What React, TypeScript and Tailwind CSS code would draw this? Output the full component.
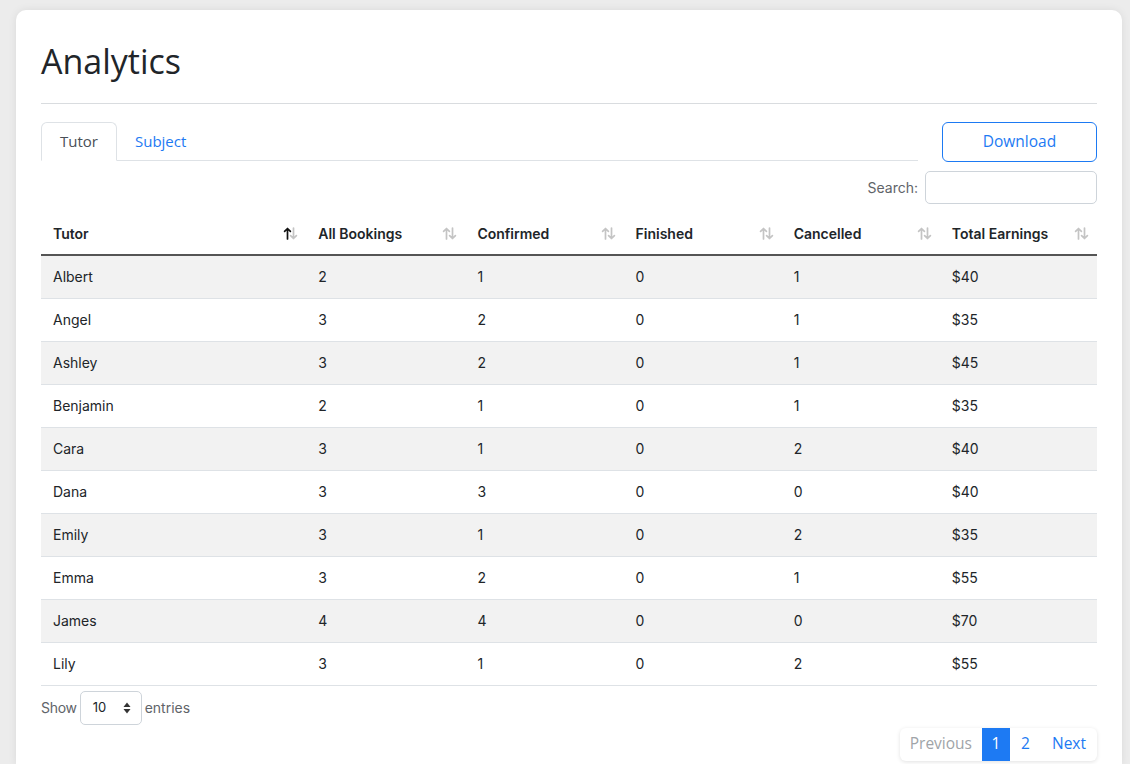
import React from "react";

type Row = { name: string; all: number; confirmed: number; finished: number; cancelled: number; earnings: string };

const rows: Row[] = [
    { name: "Albert", all: 2, confirmed: 1, finished: 0, cancelled: 1, earnings: "$40" },
    { name: "Angel", all: 3, confirmed: 2, finished: 0, cancelled: 1, earnings: "$35" },
    { name: "Ashley", all: 3, confirmed: 2, finished: 0, cancelled: 1, earnings: "$45" },
    { name: "Benjamin", all: 2, confirmed: 1, finished: 0, cancelled: 1, earnings: "$35" },
    { name: "Cara", all: 3, confirmed: 1, finished: 0, cancelled: 2, earnings: "$40" },
    { name: "Dana", all: 3, confirmed: 3, finished: 0, cancelled: 0, earnings: "$40" },
    { name: "Emily", all: 3, confirmed: 1, finished: 0, cancelled: 2, earnings: "$35" },
    { name: "Emma", all: 3, confirmed: 2, finished: 0, cancelled: 1, earnings: "$55" },
    { name: "James", all: 4, confirmed: 4, finished: 0, cancelled: 0, earnings: "$70" },
    { name: "Lily", all: 3, confirmed: 1, finished: 0, cancelled: 2, earnings: "$55" },
];

const columns = [
    { label: "Tutor", width: "w-[265px]", active: true },
    { label: "All Bookings", width: "w-[159px]", active: false },
    { label: "Confirmed", width: "w-[158px]", active: false },
    { label: "Finished", width: "w-[158px]", active: false },
    { label: "Cancelled", width: "w-[158px]", active: false },
    { label: "Total Earnings", width: "w-[157px]", active: false },
];

// little up/down arrows like datatables
const SortIcon: React.FC<{ active: boolean }> = ({ active }) => (
    <svg width="15" height="13" viewBox="0 0 15 13" fill="none" strokeWidth="1.7" strokeLinecap="round" strokeLinejoin="round">
        <path d="M4.5 12V1.5M1.6 4.4L4.5 1.5l2.9 2.9" stroke={active ? "#111" : "#c4c4c4"} />
        <path d="M10.5 1v10.5M7.6 8.6l2.9 2.9 2.9-2.9" stroke="#c4c4c4" />
    </svg>
);

const poppins = "font-['Open_Sans',sans-serif]";

export default function App() {
    return (
        <div className="min-h-[764px] bg-[#ececec] pt-[10px] pl-[16px] pr-[8px] font-['Inter',sans-serif] text-[#212529]">
            <div className="bg-white rounded-t-[10px] shadow-[0_0_8px_rgba(0,0,0,0.08)] px-[25px] pt-[30px] pb-[4px]">
                {/* Header */}
                <h1 className={`${poppins} text-[34px] leading-[42px] text-[#212529] font-normal`}>Analytics</h1>
                <div className="mt-[21px] border-t border-[#d9dcdf]" />

                {/* Tabs + download */}
                <div className="mt-[18px] flex items-start">
                    <div className="flex-1 flex border-b border-[#dee2e6] h-[39px] mr-[24px]">
                        <div className={`${poppins} px-[18px] h-[39px] flex items-center border border-[#dee2e6] border-b-white rounded-t-[6px] -mb-px bg-white text-[15px] text-[#495057]`}>
                            Tutor
                        </div>
                        <div className={`${poppins} px-[18px] h-[39px] flex items-center text-[15px] text-[#1d7af3]`}>Subject</div>
                    </div>
                    <button className={`${poppins} w-[155px] h-[40px] border border-[#1d7af3] rounded-[6px] text-[15.5px] text-[#1d7af3]`}>
                        Download
                    </button>
                </div>

                {/* Search */}
                <div className="mt-[9px] flex justify-end items-center gap-[7px]">
                    <span className="text-[14px] text-[#5f6469]">Search:</span>
                    <input className="w-[172px] h-[33px] border border-[#ced4da] rounded-[5px] outline-none" />
                </div>

                {/* Table */}
                <table className="mt-[9px] w-full border-collapse text-[14px]">
                    <thead>
                        <tr className="border-b-2 border-[#555]">
                            {columns.map((c) => (
                                <th key={c.label} className={`${c.width} h-[42px] pl-[12px] pr-[8px] text-left font-semibold`}>
                                    <div className="flex items-center justify-between">
                                        <span>{c.label}</span>
                                        <SortIcon active={c.active} />
                                    </div>
                                </th>
                            ))}
                        </tr>
                    </thead>
                    <tbody>
                        {rows.map((r, i) => (
                            <tr key={r.name} className={`border-b border-[#dee2e6] ${i % 2 === 0 ? "bg-[#f2f2f2]" : "bg-white"}`}>
                                <td className="h-[43px] px-[12px]">{r.name}</td>
                                <td className="px-[12px]">{r.all}</td>
                                <td className="px-[12px]">{r.confirmed}</td>
                                <td className="px-[12px]">{r.finished}</td>
                                <td className="px-[12px]">{r.cancelled}</td>
                                <td className="px-[12px]">{r.earnings}</td>
                            </tr>
                        ))}
                    </tbody>
                </table>

                {/* Footer */}
                <div className="mt-[5px] flex items-center gap-[3px] text-[14px] text-[#5f6469]">
                    <span className="tracking-[-0.3px]">Show</span>
                    <div className="w-[62px] h-[34px] border border-[#ced4da] rounded-[5px] flex items-center justify-between pl-[12px] pr-[10px] text-[#212529] text-[13px]">
                        <span>10</span>
                        <svg width="8" height="12" viewBox="0 0 8 12" fill="#333">
                            <path d="M4 0.5L7.5 5H0.5z" />
                            <path d="M4 11.5L0.5 7h7z" />
                        </svg>
                    </div>
                    <span>entries</span>
                </div>

                <div className="mt-[3px] flex justify-end">
                    <div className={`${poppins} flex h-[33px] rounded-[6px] shadow-[0_1px_4px_rgba(0,0,0,0.12)] overflow-hidden text-[15.5px]`}>
                        <span className="px-[10px] flex items-center text-[#a0a4a8]">Previous</span>
                        <span className="w-[28px] flex items-center justify-center bg-[#1d7af3] text-white">1</span>
                        <span className="w-[31px] flex items-center justify-center text-[#1d7af3]">2</span>
                        <span className="pl-[11px] pr-[11px] flex items-center text-[#1d7af3]">Next</span>
                    </div>
                </div>
            </div>
        </div>
    );
}
